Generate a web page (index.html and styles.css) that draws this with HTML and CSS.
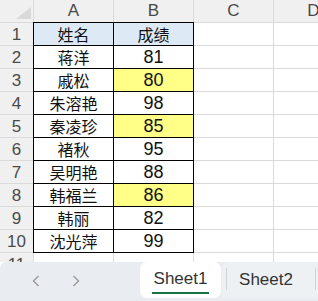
FILE: index.html
```html
<!DOCTYPE html>
<html lang="zh">
<head>
  <meta charset="UTF-8">
  <meta name="viewport" content="width=device-width, initial-scale=1.0">
  <title>成绩表</title>
  <link rel="stylesheet" href="styles.css">
</head>
<body>
  <div class="sheet">
    <div class="corner">
      <svg width="33" height="22" viewBox="0 0 33 22"><polygon points="31,7 31,19 16,19" fill="#d9d9d9"/></svg>
    </div>
    <div class="colhead">A</div>
    <div class="colhead">B</div>
    <div class="colhead">C</div>
    <div class="colhead">D</div>

    <div class="rowhead">1</div>
    <div class="cell data title">姓名</div>
    <div class="cell data title">成绩</div>
    <div class="cell"></div>
    <div class="cell"></div>

    <div class="rowhead">2</div>
    <div class="cell data">蒋洋</div>
    <div class="cell data num">81</div>
    <div class="cell"></div>
    <div class="cell"></div>

    <div class="rowhead">3</div>
    <div class="cell data">戚松</div>
    <div class="cell data num mark">80</div>
    <div class="cell"></div>
    <div class="cell"></div>

    <div class="rowhead">4</div>
    <div class="cell data">朱溶艳</div>
    <div class="cell data num">98</div>
    <div class="cell"></div>
    <div class="cell"></div>

    <div class="rowhead">5</div>
    <div class="cell data">秦凌珍</div>
    <div class="cell data num mark">85</div>
    <div class="cell"></div>
    <div class="cell"></div>

    <div class="rowhead">6</div>
    <div class="cell data">褚秋</div>
    <div class="cell data num">95</div>
    <div class="cell"></div>
    <div class="cell"></div>

    <div class="rowhead">7</div>
    <div class="cell data">吴明艳</div>
    <div class="cell data num">88</div>
    <div class="cell"></div>
    <div class="cell"></div>

    <div class="rowhead">8</div>
    <div class="cell data">韩福兰</div>
    <div class="cell data num mark">86</div>
    <div class="cell"></div>
    <div class="cell"></div>

    <div class="rowhead">9</div>
    <div class="cell data">韩丽</div>
    <div class="cell data num">82</div>
    <div class="cell"></div>
    <div class="cell"></div>

    <div class="rowhead">10</div>
    <div class="cell data">沈光萍</div>
    <div class="cell data num">99</div>
    <div class="cell"></div>
    <div class="cell"></div>

    <div class="rowhead">11</div>
    <div class="cell"></div>
    <div class="cell"></div>
    <div class="cell"></div>
    <div class="cell"></div>
  </div>

  <div class="tabbar">
    <div class="nav">
      <svg class="arrow" width="8" height="12" viewBox="0 0 8 12"><polyline points="6.5,1 1.5,6 6.5,11" fill="none" stroke="#9b9b9b" stroke-width="1.4"/></svg>
      <svg class="arrow" width="8" height="12" viewBox="0 0 8 12"><polyline points="1.5,1 6.5,6 1.5,11" fill="none" stroke="#9b9b9b" stroke-width="1.4"/></svg>
    </div>
    <div class="tab active"><span>Sheet1</span></div>
    <div class="tab other"><span>Sheet2</span></div>
  </div>
</body>
</html>
```

FILE: styles.css
```css
body {
  margin: 0;
  width: 318px;
  height: 301px;
  overflow: hidden;
  background-color: #fff;
  font-family: "Liberation Sans", "Noto Sans CJK SC", sans-serif;
}

.sheet {
  display: grid;
  grid-template-columns: 33px 79px 79px 79px 79px;
  grid-template-rows: 22px;
  grid-auto-rows: 22px;
  gap: 1px;
  background-color: #dadada;
  height: 262px;
  overflow: hidden;
}

.corner {
  background-color: #f0f0f0;
  line-height: 0;
}

.colhead {
  background-color: #f0f0f0;
  color: #4a4a4a;
  font-size: 17px;
  line-height: 22px;
  text-align: center;
}

.rowhead {
  background-color: #f0f0f0;
  color: #4a4a4a;
  font-size: 17px;
  line-height: 23px;
  text-align: center;
}

.cell {
  background-color: #fff;
  color: #000;
  font-size: 16px;
  line-height: 22px;
  text-align: center;
}

.data {
  box-shadow: 0 0 0 1px #000;
  font-family: "Noto Sans CJK SC", sans-serif;
  color: #111;
}

.num {
  font-family: "Liberation Sans", sans-serif;
  font-size: 18px;
  line-height: 23px;
}

.title {
  background-color: #dde9f5;
}

.mark {
  background-color: #ffff88;
}

.tabbar {
  display: flex;
  height: 39px;
  background-color: #e9edf1;
  border-top-left-radius: 6px;
}

.nav {
  width: 140px;
  display: flex;
  align-items: center;
  padding-left: 32px;
  gap: 32px;
  box-sizing: border-box;
  padding-bottom: 2px;
}

.tab {
  height: 36px;
  box-sizing: border-box;
  display: flex;
  justify-content: center;
  align-items: center;
  font-size: 17px;
  color: #333;
}

.tab.active {
  width: 81px;
  background-color: #fff;
  border-radius: 7px;
}

.tab.active span {
  padding-top: 2px;
  padding-bottom: 3px;
  border-bottom: 2px solid #1a7343;
  padding-left: 2px;
  padding-right: 2px;
}

.tab.other {
  flex: 1;
  margin-left: 1px;
  background-color: #eef1f4;
  border-top-left-radius: 7px;
  position: relative;
  padding-right: 8px;
}

.tab.other::before {
  content: '';
  position: absolute;
  left: 4px;
  top: 6px;
  bottom: 8px;
  border-left: 1px solid #cfd3d7;
}

.tab.other::after {
  content: '';
  position: absolute;
  right: 2px;
  top: 6px;
  bottom: 8px;
  border-left: 1px solid #cfd3d7;
}
```
